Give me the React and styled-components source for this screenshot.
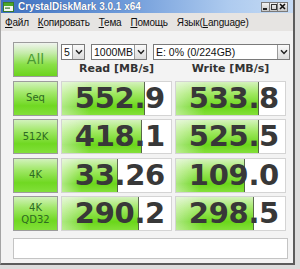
import { Fragment } from 'react';
import styled, { createGlobalStyle } from 'styled-components';

const GlobalStyle = createGlobalStyle`
  html, body {
    margin: 0;
    padding: 0;
    background: #dcdcdc;
  }
  body {
    font-family: "Liberation Sans", Arial, sans-serif;
  }
`;

const Window = styled.div`
  width: 295px;
  height: 265px;
  box-sizing: border-box;
  display: flex;
  flex-direction: column;
  background: #f3f3f3;
  border-left: 1px solid #a4a4a4;
  border-right: 2px solid #5c5c5c;
  border-bottom: 2px solid #5c5c5c;
  overflow: hidden;
`;

const TitleBar = styled.div`
  height: 13px;
  display: flex;
  align-items: center;
  padding-left: 2px;
  background: linear-gradient(to right, #3d70c0 0%, #6b98d8 40%, #aecbef 78%, #c6dbf4 100%);
`;

const TitleText = styled.span`
  margin-left: 4px;
  color: #fff;
  font-weight: bold;
  font-size: 10px;
  flex: 1;
  text-shadow: 0 0 1px rgba(0, 0, 40, 0.5);
`;

const WinButtons = styled.div`
  display: flex;
  margin-right: 5px;
`;

const WinButton = styled.div`
  width: ${(p) => p.w || 9}px;
  height: 10px;
  box-sizing: border-box;
  border: 1px solid #7a7a7a;
  background: linear-gradient(#f2f2f2, #c8c8c8);
  display: flex;
  align-items: center;
  justify-content: center;
  margin-left: -1px;
`;

const MenuBar = styled.div`
  height: 18px;
  display: flex;
  align-items: center;
  gap: 9px;
  padding-left: 4px;
  background: #e6e4e2;
  font-size: 10px;
  color: #111;
`;

const MenuItem = styled.span`
  letter-spacing: -0.2px;
`;

const Content = styled.div`
  flex: 1;
  padding: 11px 0 0 12px;
  display: flex;
  flex-direction: column;
`;

const Grid = styled.div`
  display: grid;
  grid-template-columns: 45px 111px 111px;
  grid-auto-rows: 35px;
  column-gap: 3px;
  row-gap: 3.5px;
`;

const LabelButton = styled.div`
  box-sizing: border-box;
  border: 1px solid #9c9c9c;
  display: flex;
  flex-direction: column;
  align-items: center;
  justify-content: center;
  background: ${(p) =>
    p.$all
      ? 'linear-gradient(to bottom, #f0f4ee 0%, #c6ecac 30%, #8ae048 65%, #6cd41e 100%)'
      : 'linear-gradient(to bottom, #d2f2bc 0%, #a2e86a 32%, #70d822 72%, #82e03a 100%)'};
  color: ${(p) => (p.$all ? '#4a9a32' : '#2e6a22')};
  font-family: "DejaVu Sans", Verdana, sans-serif;
  font-size: ${(p) => (p.$all ? '14px' : '10px')};
  line-height: 1.15;
`;

const TopArea = styled.div`
  grid-column: 2 / 4;
  display: flex;
  flex-direction: column;
  padding-top: 2px;
`;

const SelectRow = styled.div`
  display: flex;
  gap: 6px;
`;

const Select = styled.div`
  width: ${(p) => p.w}px;
  flex-shrink: 0;
  height: 16px;
  box-sizing: border-box;
  border: 1px solid #7a7a7a;
  background: #fff;
  display: flex;
  align-items: center;
  font-size: 10.5px;
  color: #111;
`;

const SelectText = styled.span`
  flex: 1;
  padding-left: 2px;
  white-space: nowrap;
  overflow: hidden;
`;

const Arrow = styled.div`
  width: 12px;
  height: 14px;
  box-sizing: border-box;
  border-left: 1px solid #9a9a9a;
  background: linear-gradient(#fafafa, #dcdcdc);
  display: flex;
  align-items: center;
  justify-content: center;
`;

const Headers = styled.div`
  display: grid;
  grid-template-columns: 111px 111px;
  column-gap: 3px;
  margin-top: 2px;
`;

const Header = styled.div`
  text-align: center;
  font-family: "DejaVu Sans", Verdana, sans-serif;
  font-weight: bold;
  font-size: 11px;
  color: #333;
`;

const Cell = styled.div`
  position: relative;
  box-sizing: border-box;
  border: 1px solid #d4d4d4;
  background: #fff;
  display: flex;
  align-items: center;
  justify-content: flex-end;
  padding-right: 6px;
`;

const Bar = styled.div`
  position: absolute;
  left: 0;
  top: 0;
  bottom: 0;
  border-right: 1px solid rgba(50, 60, 40, 0.75);
  background: linear-gradient(to right, rgba(255, 255, 255, 0.45), rgba(255, 255, 255, 0) 35%),
    linear-gradient(to bottom, #d4f2bc 0%, #a0e862 35%, #6ad61a 75%, #84e03a 100%);
`;

const Value = styled.span`
  position: relative;
  font-family: "DejaVu Sans", Verdana, sans-serif;
  font-weight: bold;
  font-size: 29px;
  letter-spacing: -0.3px;
  color: #383838;
  line-height: 1;
`;

const StatusBox = styled.div`
  width: 275px;
  height: 21px;
  box-sizing: border-box;
  margin-top: 7px;
  border: 1px solid #c4c4c4;
  background: #fff;
`;

const Chevron = () => (
  <svg width="8" height="6" viewBox="0 0 8 6">
    <path d="M1 1.2 L4 4.4 L7 1.2" fill="none" stroke="#222" strokeWidth="1.5" />
  </svg>
);

const rows = [
  { label: ['Seq'], read: '552.9', rw: 82, write: '533.8', ww: 82 },
  { label: ['512K'], read: '418.1', rw: 79, write: '525.5', ww: 82 },
  { label: ['4K'], read: '33.26', rw: 55, write: '109.0', ww: 68 },
  { label: ['4K', 'QD32'], read: '290.2', rw: 76, write: '298.5', ww: 77 },
];

const App = () => {
  return (
    <>
      <GlobalStyle />
      <Window>
        <TitleBar>
          <svg width="11" height="10" viewBox="0 0 11 10">
            <rect x="0.5" y="0.5" width="10" height="9" fill="#f4f8f0" stroke="#3a7a2a" />
            <rect x="1" y="1" width="9" height="3" fill="#4aa82a" />
            <rect x="2" y="5.5" width="5" height="1.2" fill="#3a7a2a" />
          </svg>
          <TitleText>CrystalDiskMark 3.0.1 x64</TitleText>
          <WinButtons>
            <WinButton>
              <svg width="5" height="6" viewBox="0 0 5 6">
                <rect x="0" y="4" width="4" height="2" fill="#222" />
              </svg>
            </WinButton>
            <WinButton>
              <svg width="6" height="6" viewBox="0 0 6 6">
                <rect x="0.5" y="0.5" width="5" height="5" fill="none" stroke="#333" />
              </svg>
            </WinButton>
            <WinButton w={11}>
              <svg width="7" height="7" viewBox="0 0 7 7">
                <path d="M1 1 L6 6 M6 1 L1 6" stroke="#111" strokeWidth="1.6" />
              </svg>
            </WinButton>
          </WinButtons>
        </TitleBar>
        <MenuBar>
          <MenuItem><u>Ф</u>айл</MenuItem>
          <MenuItem><u>К</u>опировать</MenuItem>
          <MenuItem><u>Т</u>ема</MenuItem>
          <MenuItem><u>П</u>омощь</MenuItem>
          <MenuItem>Язык(<u>L</u>anguage)</MenuItem>
        </MenuBar>
        <Content>
          <Grid>
            <LabelButton $all>All</LabelButton>
            <TopArea>
              <SelectRow>
                <Select w={24}>
                  <SelectText>5</SelectText>
                  <Arrow><Chevron /></Arrow>
                </Select>
                <Select w={56}>
                  <SelectText>1000MB</SelectText>
                  <Arrow><Chevron /></Arrow>
                </Select>
                <Select w={137}>
                  <SelectText>E: 0% (0/224GB)</SelectText>
                  <Arrow><Chevron /></Arrow>
                </Select>
              </SelectRow>
              <Headers>
                <Header>Read [MB/s]</Header>
                <Header>Write [MB/s]</Header>
              </Headers>
            </TopArea>
            {rows.map((r) => (
              <Fragment key={r.read}>
                <LabelButton>
                  {r.label.map((t) => (
                    <span key={t}>{t}</span>
                  ))}
                </LabelButton>
                <Cell>
                  <Bar style={{ width: r.rw }} />
                  <Value>{r.read}</Value>
                </Cell>
                <Cell>
                  <Bar style={{ width: r.ww }} />
                  <Value>{r.write}</Value>
                </Cell>
              </Fragment>
            ))}
          </Grid>
          <StatusBox />
        </Content>
      </Window>
    </>
  );
};

export default App;
